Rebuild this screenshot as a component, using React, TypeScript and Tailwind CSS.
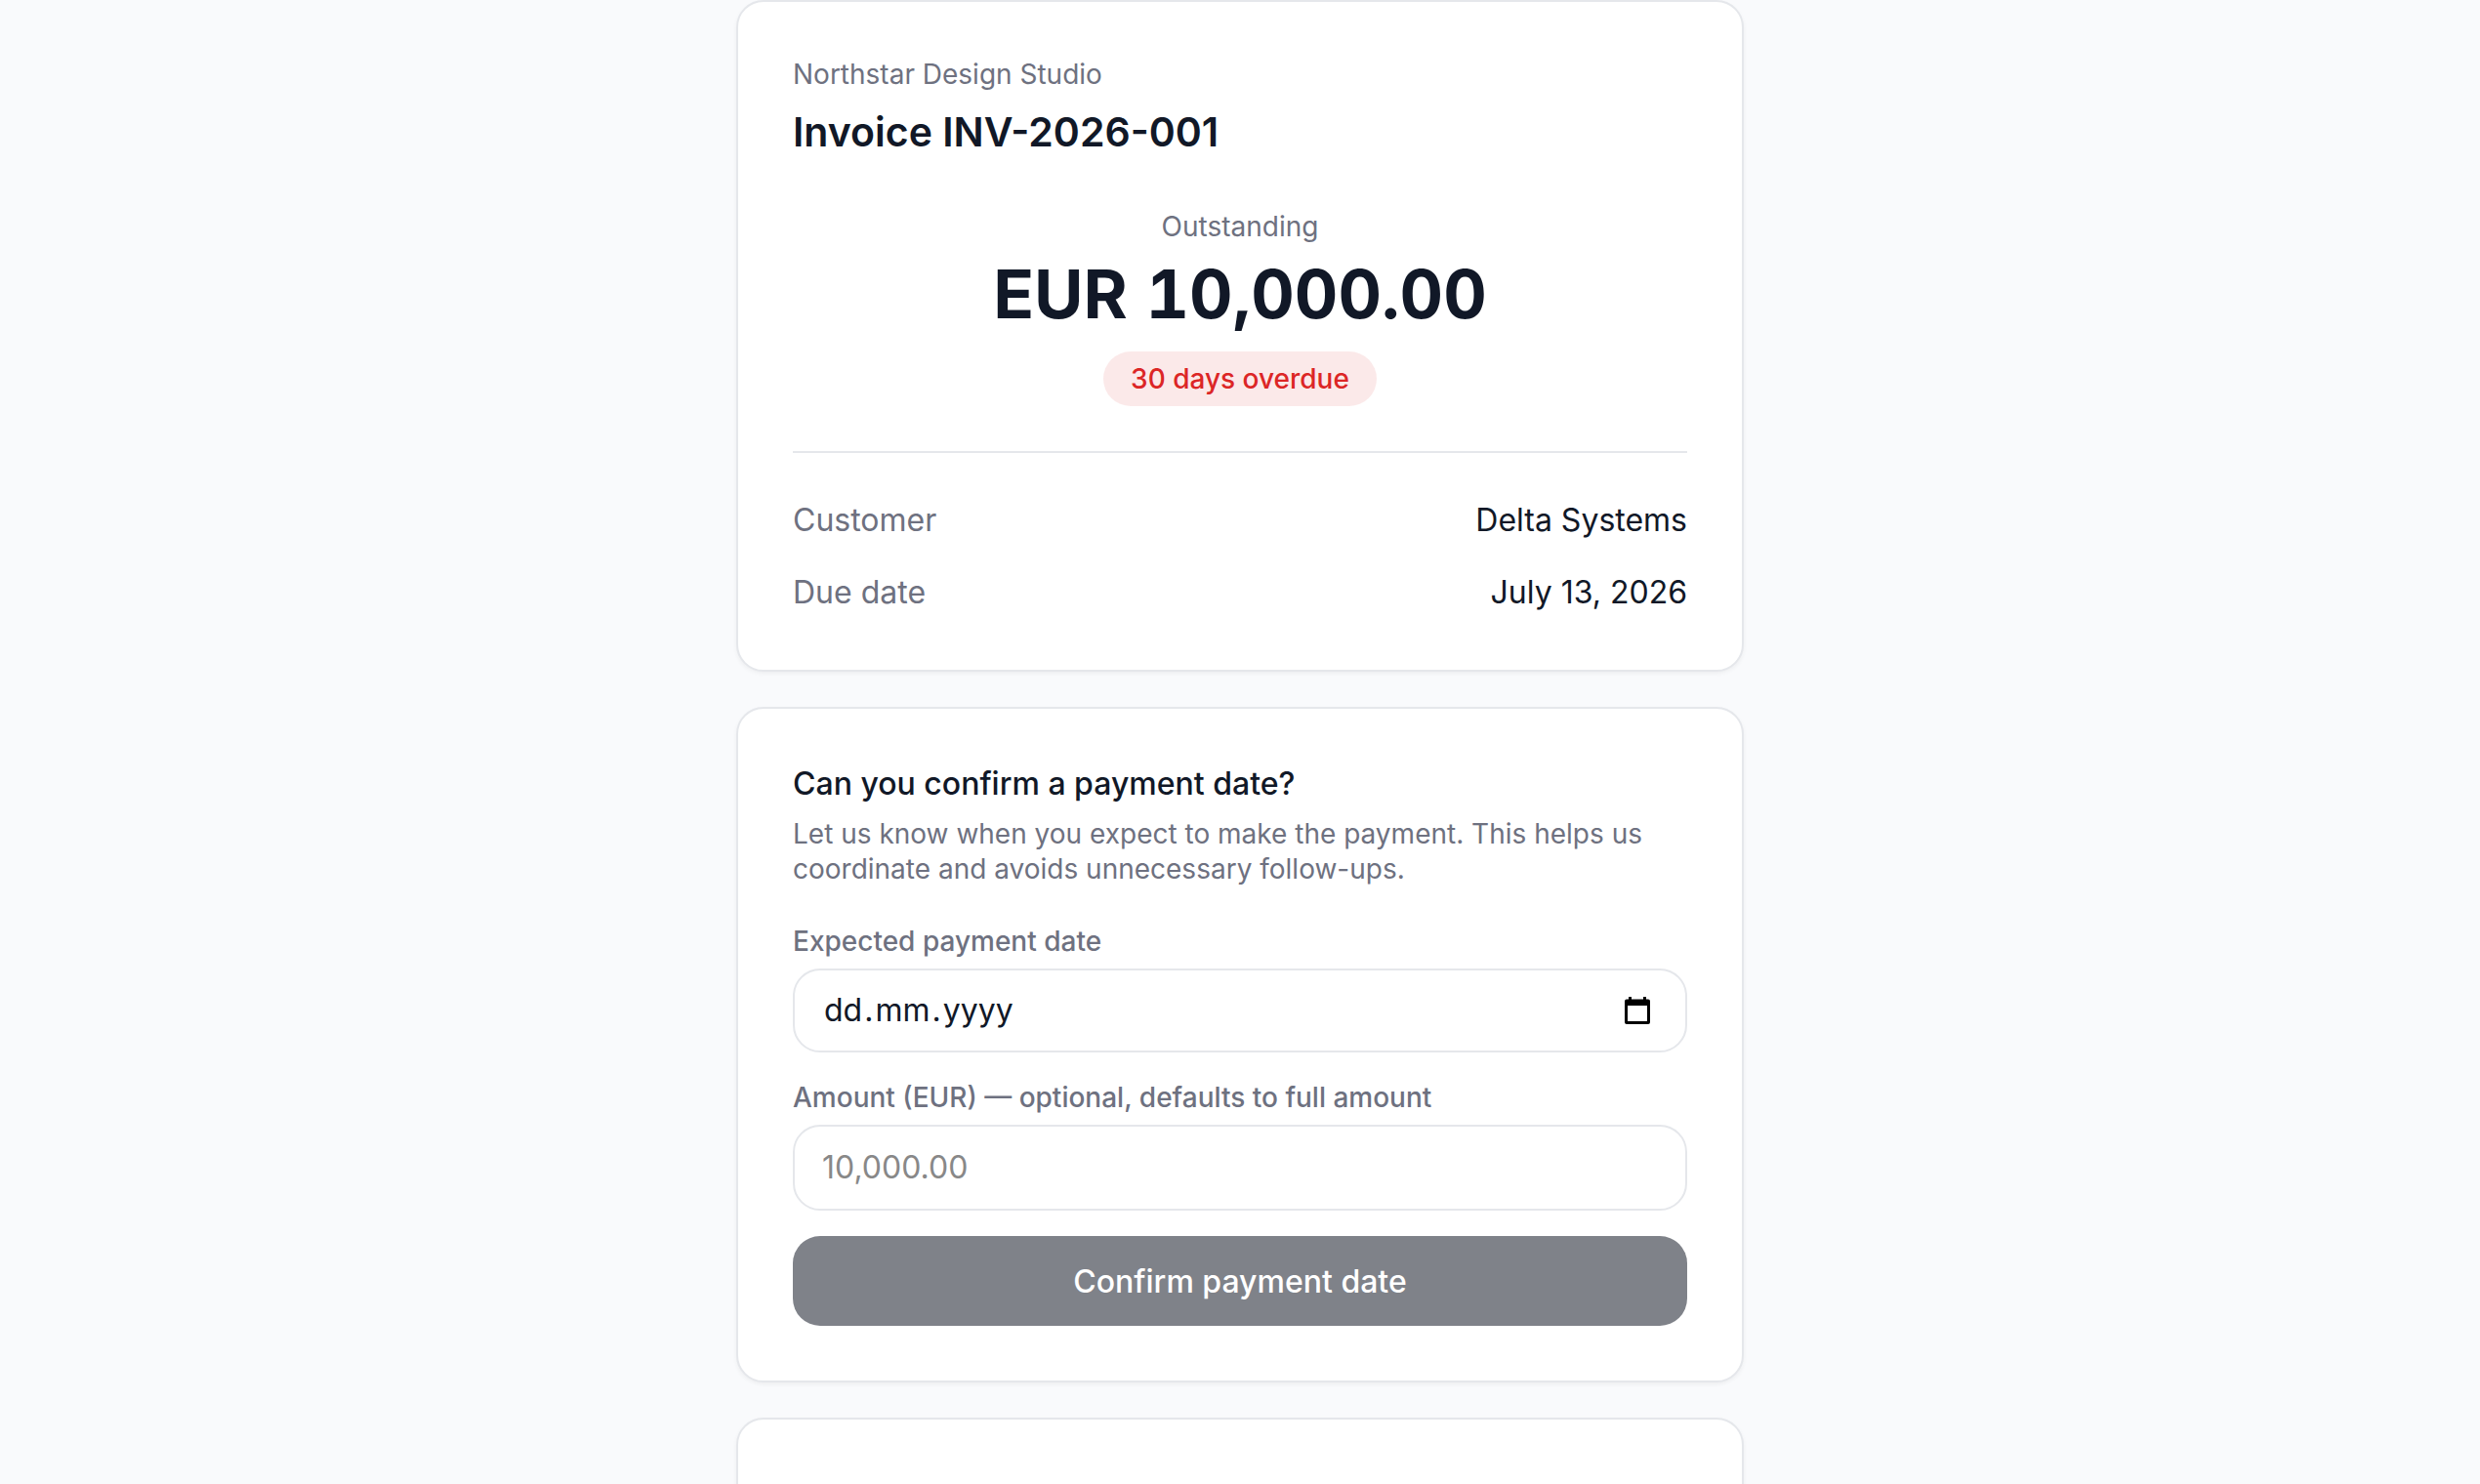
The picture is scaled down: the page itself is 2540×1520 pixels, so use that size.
import type { ReactNode } from "react";

function Card({ children, className = "" }: { children?: ReactNode; className?: string }) {
  return (
    <section
      className={`shrink-0 rounded-[28px] border-2 border-[#e5e7eb] bg-white p-14 shadow-[0_2px_4px_rgba(0,0,0,0.05)] ${className}`}
    >
      {children}
    </section>
  );
}

function DetailRow({ term, value }: { term: string; value: string }) {
  return (
    <div className="flex justify-between text-[32px] leading-[46px]">
      <dt className="text-[#6e7180]">{term}</dt>
      <dd>{value}</dd>
    </div>
  );
}

function CalendarIcon() {
  return (
    <svg width="26" height="28" viewBox="0 0 26 28" fill="none" aria-hidden="true">
      <path
        fill="#000"
        fillRule="evenodd"
        d="M4 0h3v2.500h12V0h3v2.500h2a2 2 0 0 1 2 2V26a2 2 0 0 1-2 2H2a2 2 0 0 1-2-2V4.500a2 2 0 0 1 2-2h2V0ZM3 9v16h20V9H3Z"
      />
    </svg>
  );
}

const datePart =
  "field-sizing-content px-[2px] outline-none placeholder:text-[#111827] placeholder:opacity-100";

export default function App() {
  return (
    <main className="h-screen overflow-hidden bg-[#f9fafc] font-['Inter',sans-serif] text-[#111827]">
      <div className="mx-auto flex w-full max-w-[1032px] flex-col gap-9">
        <Card>
          <p className="text-[28px] leading-9 text-[#6e7180]">Northstar Design Studio</p>
          <h1 className="mt-4 text-[41px] leading-[50px] font-semibold">Invoice INV-2026-001</h1>
          <div className="mt-[54px] flex flex-col items-center border-b-2 border-[#e5e7eb] pb-[46px]">
            <p className="text-[28px] leading-9 text-[#6e7180]">Outstanding</p>
            <p className="mt-4 text-[69px] leading-[70px] font-bold tabular-nums">EUR 10,000.00</p>
            <p className="mt-6 rounded-full bg-[#dc2626]/10 px-7 py-[10px] text-[28px] leading-9 font-medium text-[#dc2626]">
              30 days overdue
            </p>
          </div>
          <dl className="flex flex-col gap-7 pt-[46px]">
            <DetailRow term="Customer" value="Delta Systems" />
            <DetailRow term="Due date" value="July 13, 2026" />
          </dl>
        </Card>

        <Card>
          <h2 className="text-[32px] leading-[42px] font-medium">Can you confirm a payment date?</h2>
          <p className="mt-3 text-[28px] leading-9 text-[#6e7180]">
            Let us know when you expect to make the payment. This helps us coordinate and avoids
            unnecessary follow-ups.
          </p>
          <form className="mt-[38px] flex flex-col">
            <label htmlFor="day" className="text-[28px] leading-9 font-medium text-[#6e7180]">
              Expected payment date
            </label>
            <div className="mt-[10px] flex h-[86px] items-center justify-between rounded-[28px] border-2 border-[#e5e7eb] px-7 text-[32px] leading-10">
              <div className="flex items-center">
                <input id="day" placeholder="dd" className={datePart} />
                <span>.</span>
                <input aria-label="Month" placeholder="mm" className={datePart} />
                <span>.</span>
                <input aria-label="Year" placeholder="yyyy" className={datePart} />
              </div>
              <button type="button" aria-label="Open calendar" className="px-2">
                <CalendarIcon />
              </button>
            </div>
            <label htmlFor="amount" className="mt-7 text-[28px] leading-9 font-medium text-[#6e7180]">
              Amount (EUR) — optional, defaults to full amount
            </label>
            <input
              id="amount"
              inputMode="decimal"
              placeholder="10,000.00"
              className="mt-[10px] h-[88px] rounded-[28px] border-2 border-[#e5e7eb] px-7 pb-[2px] text-[32px] leading-10 outline-none placeholder:text-[#888888] placeholder:opacity-100"
            />
            <button
              type="submit"
              disabled
              className="mt-[26px] h-[92px] rounded-[28px] bg-[#7f8289] pt-[2px] text-[32px] leading-10 font-medium text-white"
            >
              Confirm payment date
            </button>
          </form>
        </Card>

        <Card className="min-h-64" />
      </div>
    </main>
  );
}
